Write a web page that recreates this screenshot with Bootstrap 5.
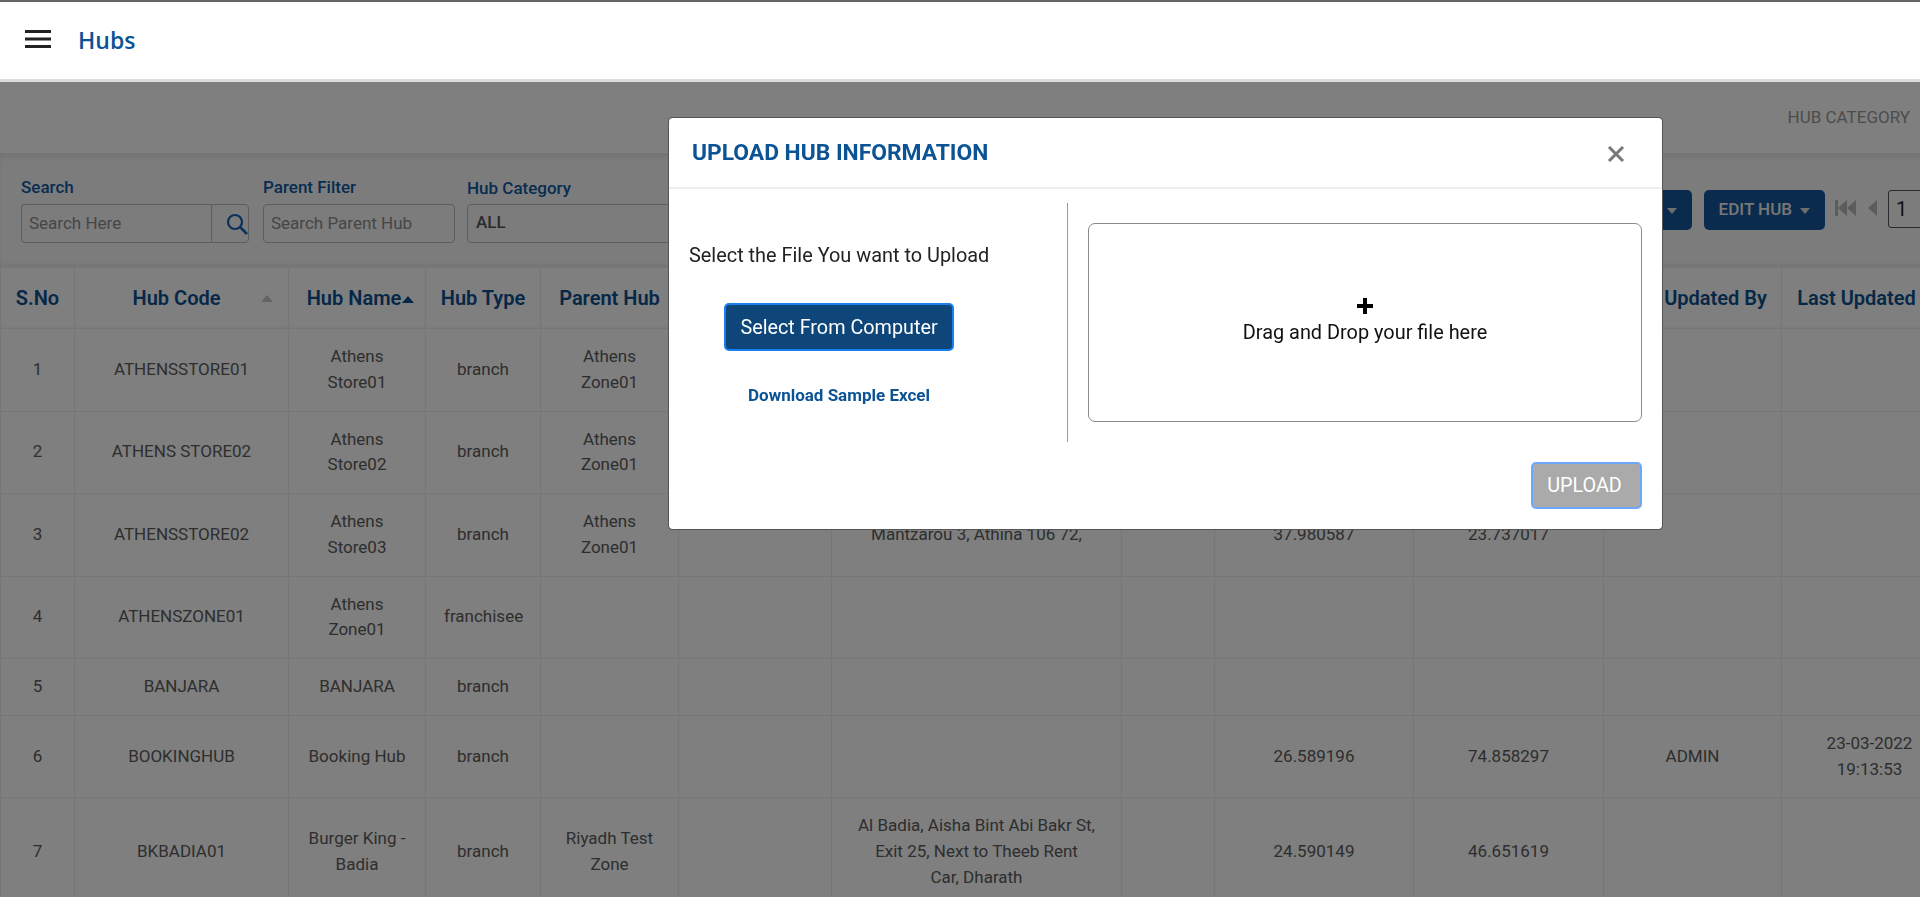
<!DOCTYPE html>
<html lang="en">
<head>
<meta charset="utf-8">
<title>Hubs</title>
<link href="https://cdn.jsdelivr.net/npm/bootstrap@5.3.0/dist/css/bootstrap.min.css" rel="stylesheet">
<style>
html,body{height:897px;overflow:hidden}
body{font-family:Roboto,"Liberation Sans",sans-serif;font-size:17px;background:#fff;color:#5f5f5f}
.topbar{height:82px;background:#fff;border-top:2px solid #666;border-bottom:3px solid #ddd;position:relative;z-index:1060;padding:0 0 0 25px;flex-wrap:nowrap;justify-content:flex-start}
.burger{width:26px;height:18px;display:block;margin-top:-3px}
.page-title{font-family:"Open Sans",sans-serif;font-weight:600;font-size:23px;color:#0b5394;margin:0 0 0 27px;line-height:1}
.canvas{width:1957px}
.crumb-band{height:71px;background:#fff;padding:0 47px 0 0;font-size:17px;color:#999}
.filter-bar{height:114px;background:#f9f9f9;box-shadow:inset 0 6px 8px -4px rgba(0,0,0,.12),inset 0 -5px 6px -4px rgba(0,0,0,.1);padding:25px 9px 0 21px}
.flabel{font-size:17px;font-weight:500;color:#0f5aa3;line-height:20px;margin-bottom:6px;display:block}
.flabel-up{margin-top:-1px;margin-bottom:7px}
.fld{height:39px;font-size:17px;border:1px solid #bbb;border-radius:4px;padding:0 7px 2px;color:#444;background:#f9f9f9}
.fld::placeholder{color:#8d8d8d;opacity:1}
.fld-search{width:190px;border-radius:4px 0 0 4px;border-right:0}
.search-btn{width:38px;height:39px;border:1px solid #bbb;border-radius:0 4px 4px 0;background:#f9f9f9;display:flex;align-items:center;justify-content:center;padding:0 0 0 13px}
.fld-parent{width:192px}
.fld-cat{width:300px;font-weight:500;padding-left:8px;color:#555}
.gap-a{margin-left:14px}.gap-b{margin-left:12px}
.act-btn{background:#14579b;color:#eee;font-weight:500;font-size:17px;border:0;border-radius:5px;height:40px;padding:0 15px;display:flex;align-items:center;margin-top:12px}
.act-btn i{display:block;width:0;height:0;border-left:5px solid transparent;border-right:5px solid transparent;border-top:6px solid #ddd;margin-left:8px;margin-top:2px}
.act-gap{margin-left:12px;margin-right:10px}
.pager-ico{display:block;margin-top:22px}
.pg-first{margin-right:12px}
.pg-prev{margin-right:11px}
.pg-input{width:60px;height:38px;border:1px solid #555;border-radius:3px;font-size:20px;padding:0 7px;color:#222;margin-top:12px;background:#f9f9f9}
.data-table{table-layout:fixed;width:1957px;margin:0;--bs-table-bg:#fdfefd;border-color:#ececec;color:#5c5c5c}
.data-table th{height:61px;vertical-align:middle;text-align:center;font-size:20px;font-weight:600;color:#0d5090;padding:0 2px;background:#fff;white-space:nowrap;box-shadow:inset 0 -3px 4px -2px rgba(0,0,0,.06)}
.data-table td{padding:15px 18px;line-height:25.75px;text-align:center;vertical-align:middle;font-size:17px}
.sort-up{display:inline-block;width:0;height:0;border-left:6px solid transparent;border-right:6px solid transparent;border-bottom:7px solid #0d5090;vertical-align:middle;margin-left:1px}
.sort-wrap{display:flex;align-items:center;justify-content:center;position:relative}
.sort-wrap .sort-up{position:absolute;right:13px;border-bottom-color:#c9c9c9}
.code-th{margin-right:10px}
.name-th{margin-left:7px}
.upd-th{margin-left:46px}
.last-th{margin-right:26px}
.upload-modal{max-width:995px;width:995px;margin:117px 0 0 668px}
.upload-modal .modal-content{border-radius:4px;border:1px solid #555;height:413px}
.upload-modal .modal-header{height:71px;padding:0 22px 0 23px;border-bottom:2px solid #eee}
.modal-ttl{font-size:22.8px;font-weight:700;color:#0b5394;line-height:1;margin:2px 0 0}
.x-btn{background:none;border:0;padding:0;width:18px;height:18px;margin:-6px 15px 0 0;display:block}
.upload-modal .modal-body{padding:14px 20px 0 0;flex:none}
.left-pane{width:399px;height:239px;border-right:1px solid #999;padding-top:38px}
.lead-txt{font-size:19.9px;color:#222;line-height:30px;margin:0;padding-left:20px;text-align:left}
.pick-btn{background:#0f4679;color:#fff;font-size:19.8px;height:48px;width:230px;border:2px solid #1a80f0;border-radius:5px;margin:32px 0 0 55px;display:block;padding:2px 0 0}
.sample-link{display:block;margin:32px 0 0 0;text-align:center;font-weight:700;font-size:17px;color:#0b5394;line-height:24px;text-decoration:none;width:340px}
.right-pane{padding:20px 0 0 20px}
.drop-zone{width:554px;height:199px;border:1px solid #8a8a8a;border-radius:7px;color:#111;font-size:19.9px;line-height:26px;display:flex;flex-direction:column;align-items:center;justify-content:center}
.plus-ico{display:block;margin:-2px 0 6px}
.upload-modal .modal-footer{border:0;padding:20px 20px 0 0;display:flex;justify-content:flex-end;margin:0}
.up-btn{width:111px;height:47px;background:#aaa;color:#fff;font-size:19.8px;border:2px solid #6ea8fe;border-radius:5px;padding:0 4px 0 0;margin:0}
</style>
</head>
<body>
<nav class="navbar topbar">
  <svg class="burger" viewBox="0 0 26 18" aria-hidden="true"><rect y="0" width="26" height="3" fill="#222"/><rect y="7.5" width="26" height="3" fill="#222"/><rect y="15" width="26" height="3" fill="#222"/></svg>
  <h1 class="page-title">Hubs</h1>
</nav>
<div class="canvas">
  <div class="crumb-band d-flex align-items-center justify-content-end"><span>HUB CATEGORY</span></div>
  <div class="filter-bar d-flex align-items-start">
    <div>
      <label class="flabel flabel-up">Search</label>
      <div class="d-flex">
        <input class="fld fld-search" placeholder="Search Here">
        <span class="search-btn"><svg width="22" height="22" viewBox="0 0 22 22" fill="none" stroke="#1565b5" stroke-width="2.2" aria-hidden="true"><circle cx="9" cy="9" r="7"/><path d="M14 14l7 7" stroke-width="2.6"/></svg></span>
      </div>
    </div>
    <div class="gap-a">
      <label class="flabel flabel-up">Parent Filter</label>
      <input class="fld fld-parent" placeholder="Search Parent Hub">
    </div>
    <div class="gap-b">
      <label class="flabel">Hub Category</label>
      <div class="fld fld-cat d-flex align-items-center">ALL</div>
    </div>
    <div class="ms-auto d-flex align-items-start">
      <button class="act-btn">ADD HUB<i></i></button>
      <button class="act-btn act-gap">EDIT HUB<i></i></button>
      <svg class="pager-ico pg-first" width="21" height="16" viewBox="0 0 21 16" aria-hidden="true"><rect x="0" y="0" width="3" height="16" fill="#b9b9b9"/><path d="M12 0v16L3 8zM21 0v16l-9-8z" fill="#b9b9b9"/></svg>
      <svg class="pager-ico pg-prev" width="9" height="16" viewBox="0 0 9 16" aria-hidden="true"><path d="M9 0v16L0 8z" fill="#b9b9b9"/></svg>
      <input class="pg-input" value="1">
    </div>
  </div>
  <table class="table table-bordered data-table">
    <colgroup>
      <col style="width:74px"><col style="width:214px"><col style="width:137px"><col style="width:115px"><col style="width:138px"><col style="width:153px"><col style="width:290px"><col style="width:93px"><col style="width:199px"><col style="width:190px"><col style="width:178px"><col style="width:176px">
    </colgroup>
    <thead>
      <tr>
        <th>S.No</th><th><div class="sort-wrap"><span class="code-th">Hub Code</span><span class="sort-up"></span></div></th><th><span class="name-th">Hub Name</span><span class="sort-up"></span></th><th>Hub Type</th><th>Parent Hub</th><th>Category</th><th>Address</th><th>City</th><th>Latitude</th><th>Longitude</th><th><span class="upd-th">Updated By</span></th><th><span class="last-th">Last Updated</span></th>
      </tr>
    </thead>
    <tbody>
      <tr><td>1</td><td>ATHENSSTORE01</td><td>Athens Store01</td><td>branch</td><td>Athens Zone01</td><td></td><td></td><td></td><td></td><td></td><td></td><td></td></tr>
      <tr><td>2</td><td>ATHENS STORE02</td><td>Athens Store02</td><td>branch</td><td>Athens Zone01</td><td></td><td></td><td></td><td></td><td></td><td></td><td></td></tr>
      <tr><td>3</td><td>ATHENSSTORE02</td><td>Athens Store03</td><td>branch</td><td>Athens Zone01</td><td></td><td>Mantzarou 3, Athina 106 72,</td><td></td><td>37.980587</td><td>23.737017</td><td></td><td></td></tr>
      <tr><td>4</td><td>ATHENSZONE01</td><td>Athens Zone01</td><td>franchisee</td><td></td><td></td><td></td><td></td><td></td><td></td><td></td><td></td></tr>
      <tr><td>5</td><td>BANJARA</td><td>BANJARA</td><td>branch</td><td></td><td></td><td></td><td></td><td></td><td></td><td></td><td></td></tr>
      <tr><td>6</td><td>BOOKINGHUB</td><td>Booking Hub</td><td>branch</td><td></td><td></td><td></td><td></td><td>26.589196</td><td>74.858297</td><td>ADMIN</td><td>23-03-2022 19:13:53</td></tr>
      <tr><td>7</td><td>BKBADIA01</td><td>Burger King - Badia</td><td>branch</td><td>Riyadh Test Zone</td><td></td><td>Al Badia, Aisha Bint Abi Bakr St, Exit 25, Next to Theeb Rent<br>Car, Dharath</td><td></td><td>24.590149</td><td>46.651619</td><td></td><td></td></tr>
    </tbody>
  </table>
</div>
<div class="modal-backdrop show"></div>
<div class="modal d-block" tabindex="-1">
  <div class="modal-dialog upload-modal">
    <div class="modal-content">
      <div class="modal-header d-flex justify-content-between">
        <h5 class="modal-ttl">UPLOAD HUB INFORMATION</h5>
        <button class="x-btn" aria-label="Close"><svg width="18" height="18" viewBox="0 0 18 18" aria-hidden="true"><path d="M2 2l14 14M16 2L2 16" stroke="#777" stroke-width="3"/></svg></button>
      </div>
      <div class="modal-body d-flex">
        <div class="left-pane">
          <p class="lead-txt">Select the File You want to Upload</p>
          <button class="pick-btn">Select From Computer</button>
          <a class="sample-link" href="#">Download Sample Excel</a>
        </div>
        <div class="right-pane">
          <div class="drop-zone">
            <svg class="plus-ico" width="16" height="16" viewBox="0 0 16 16" aria-hidden="true"><path d="M6 0h4v6h6v4h-6v6H6v-6H0V6h6z" fill="#000"/></svg>
            <span>Drag and Drop your file here</span>
          </div>
        </div>
      </div>
      <div class="modal-footer"><button class="up-btn">UPLOAD</button></div>
    </div>
  </div>
</div>
</body>
</html>
